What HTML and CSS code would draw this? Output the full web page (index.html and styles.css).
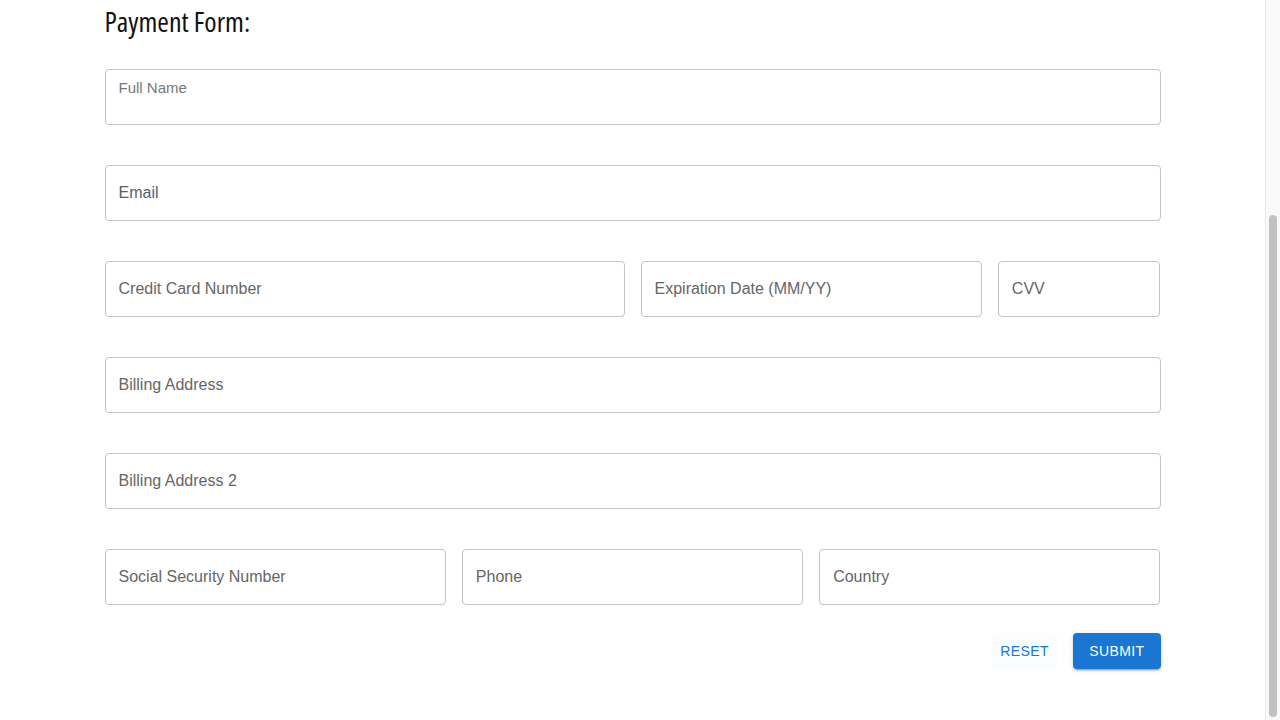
FILE: index.html
```html
<!DOCTYPE html>
<html lang="en">
<head>
<meta charset="utf-8">
<title>Payment Form</title>
<link rel="stylesheet" href="styles.css">
</head>
<body>
<div class="app">
  <main class="content">
    <div class="container">
      <h1 class="title">Payment Form:</h1>
      <form class="form">
        <div class="row">
          <textarea class="field field-area col-12" placeholder="Full Name"></textarea>
        </div>
        <div class="row">
          <input class="field field-email col-12" placeholder="Email">
        </div>
        <div class="row">
          <input class="field col-6" placeholder="Credit Card Number">
          <input class="field col-4" placeholder="Expiration Date (MM/YY)">
          <input class="field col-2" placeholder="CVV">
        </div>
        <div class="row">
          <input class="field col-12" placeholder="Billing Address">
        </div>
        <div class="row">
          <input class="field col-12" placeholder="Billing Address 2">
        </div>
        <div class="row">
          <input class="field col-4" placeholder="Social Security Number">
          <input class="field col-4" placeholder="Phone">
          <input class="field col-4" placeholder="Country">
        </div>
        <div class="actions">
          <button type="reset" class="btn btn-text">Reset</button>
          <button type="button" class="btn btn-contained">Submit</button>
        </div>
      </form>
    </div>
  </main>
  <div class="scrollbar" aria-hidden="true">
    <div class="scroll-thumb"></div>
  </div>
</div>
</body>
</html>
```
FILE: styles.css
```css
html, body {
  margin: 0;
  padding: 0;
  background: #fff;
}
body {
  font-family: "Liberation Sans", Arial, sans-serif;
}
.app {
  display: flex;
  height: 720px;
  overflow: hidden;
}
.content {
  flex: 1;
  min-width: 0;
}
.container {
  width: 1056px;
  margin: 0 auto;
  padding-top: 4px;
}
.title {
  margin: 0;
  font-family: "Open Sans", sans-serif;
  font-stretch: 75%;
  font-weight: 400;
  font-size: 28px;
  line-height: 34px;
  color: #111;
}
.form {
  display: flex;
  flex-direction: column;
  gap: 40px;
  margin-top: 31px;
}
.row {
  display: flex;
  gap: 16px;
}
.field {
  box-sizing: border-box;
  height: 56px;
  border: 1px solid #c4c4c4;
  border-radius: 4px;
  padding: 0 13px;
  font-family: "Liberation Sans", Arial, sans-serif;
  font-size: 16px;
  color: #222;
  background: #fff;
  outline: none;
  margin: 0;
}
.field::placeholder {
  color: #666;
  opacity: 1;
}
.field-email::placeholder {
  color: #56616e;
}
.field-area {
  resize: none;
  padding-top: 9px;
  font-size: 15px;
  line-height: 18px;
}
.field-area::placeholder {
  color: #777;
}
.col-12 { width: 1056px; }
.col-6 { width: 520px; }
.col-4 { width: 341.33px; }
.col-2 { width: 162.67px; }
.actions {
  display: flex;
  justify-content: flex-end;
  gap: 16px;
  margin-top: -12px;
}
.btn {
  height: 36px;
  border: none;
  border-radius: 4px;
  font-family: "Liberation Sans", Arial, sans-serif;
  font-size: 14px;
  letter-spacing: 0.4px;
  text-transform: uppercase;
  cursor: pointer;
}
.btn-text {
  min-width: 65px;
  padding: 0 8px;
  background: rgba(25, 118, 210, 0.025);
  color: #1976d2;
}
.btn-contained {
  padding: 0 16px;
  min-width: 87px;
  background: #1976d2;
  color: #fff;
  box-shadow: 0 3px 1px -2px rgba(0,0,0,0.2), 0 2px 2px 0 rgba(0,0,0,0.14), 0 1px 5px 0 rgba(0,0,0,0.12);
}
.scrollbar {
  flex: 0 0 15px;
  box-sizing: border-box;
  border-left: 1px solid #e8e8e8;
  background: #f9f9f9;
  padding: 215px 3px 3px 3px;
}
.scroll-thumb {
  height: 502px;
  border-radius: 4px;
  background: #c1c1c1;
}
```
